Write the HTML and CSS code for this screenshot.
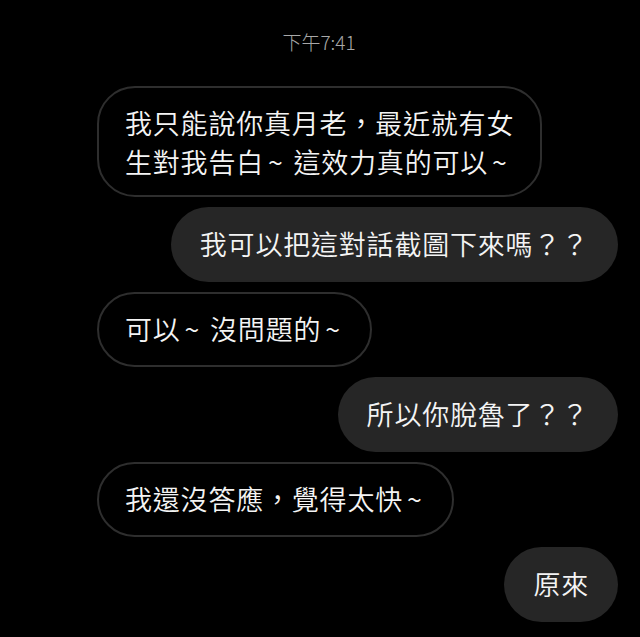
FILE: index.html
```html
<!DOCTYPE html>
<html>
<head>
  <meta charset="utf-8">
  <link rel="stylesheet" href="styles.css">
</head>
<body>
  <div class="chat">
    <div class="time">下午7:41</div>
    <div class="msg them tall">我只能說你真月老，最近就有女<br>生對我告白<span class="tilde">~</span> 這效力真的可以<span class="tilde">~</span></div>
    <div class="msg me">我可以把這對話截圖下來嗎？？</div>
    <div class="msg them">可以<span class="tilde">~</span> 沒問題的<span class="tilde">~</span></div>
    <div class="msg me">所以你脫魯了？？</div>
    <div class="msg them">我還沒答應，覺得太快<span class="tilde">~</span></div>
    <div class="msg me">原來</div>
  </div>
</body>
</html>
```

FILE: styles.css
```css
* {
  box-sizing: border-box;
}

body {
  margin: 0;
  background-color: #000;
  font-family: "Noto Sans CJK TC", "Noto Sans", sans-serif;
}

.chat {
  display: flex;
  flex-direction: column;
  gap: 10px;
  padding: 0 22px 0 97px;
}

.time {
  align-self: center;
  margin: 29px 0 21px 0;
  padding-right: 77px;
  color: #a8a8a8;
  font-size: 19px;
  font-weight: 300;
  line-height: 26px;
}

.msg {
  max-width: 460px;
  padding: 17px 26px 19px 26px;
  border-radius: 38px;
  color: #f4f4f4;
  font-size: 27px;
  font-weight: 350;
  letter-spacing: 0.8px;
  line-height: 35px;
}

/* two lines: keep the line boxes apart */
.tall {
  padding: 15px 26px 14px 26px;
  line-height: 39px;
}

.tilde {
  margin: 0 3px 0 4px;
}

.them {
  align-self: flex-start;
  border: 2px solid #2e2e2e;
  background-color: #000;
}

.me {
  align-self: flex-end;
  padding: 19px 29px 21px 29px;
  background-color: #262626;
}
```
